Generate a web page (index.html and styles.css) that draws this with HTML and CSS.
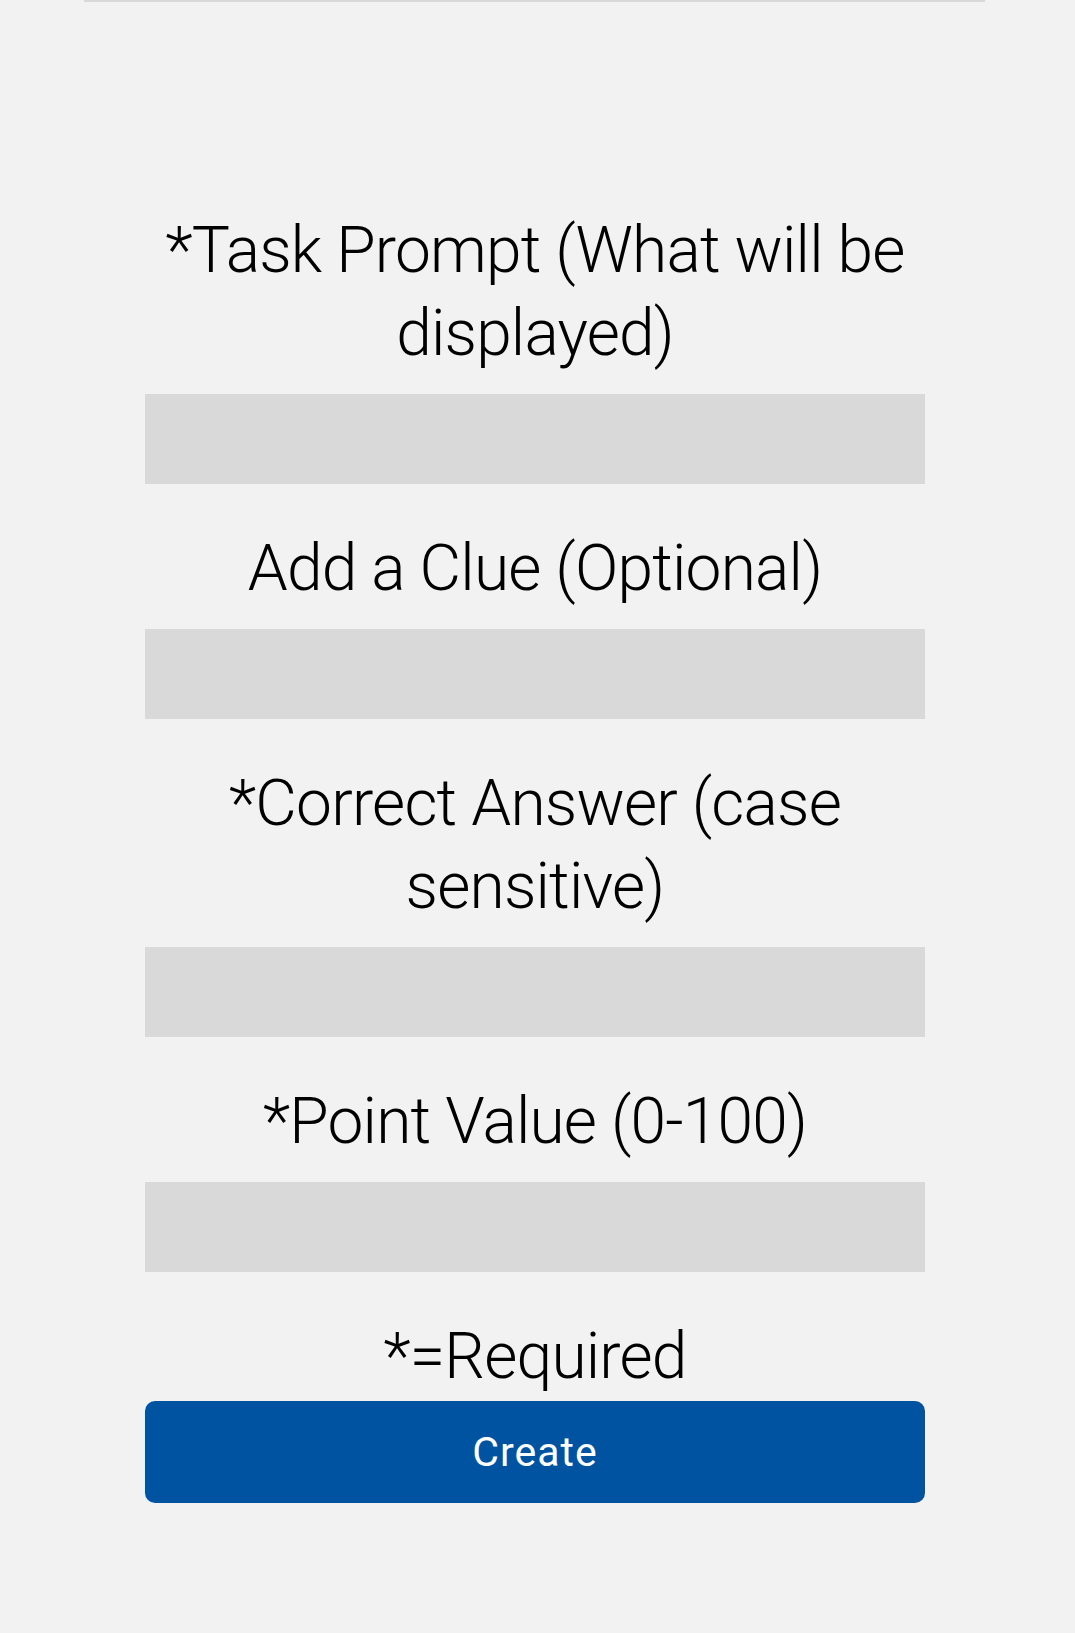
FILE: index.html
```html
<!DOCTYPE html>
<html lang="en">
<head>
<meta charset="utf-8">
<title>Create Task</title>
<link rel="stylesheet" href="styles.css">
</head>
<body>
<div class="page">
  <form class="task-form">
    <label class="field-label" for="prompt">*Task Prompt (What will be displayed)</label>
    <input class="field-input" id="prompt" type="text">
    <label class="field-label" for="clue">Add a Clue (Optional)</label>
    <input class="field-input" id="clue" type="text">
    <label class="field-label" for="answer">*Correct Answer (case sensitive)</label>
    <input class="field-input" id="answer" type="text">
    <label class="field-label" for="points">*Point Value (0-100)</label>
    <input class="field-input" id="points" type="text">
    <p class="required-note">*=Required</p>
    <button class="create-btn" type="button">Create</button>
  </form>
</div>
</body>
</html>
```

FILE: styles.css
```css
html, body {
  margin: 0;
  padding: 0;
  background: #f2f2f2;
}

body {
  font-family: Roboto, "Noto Sans", sans-serif;
  font-weight: 300;
  color: #000;
}

.page {
  width: 901px;
  margin-left: 84px;
  border-top: 2px solid #d9d9d9;
  min-height: 1631px;
  box-sizing: border-box;
  padding-top: 207px;
}

.task-form {
  width: 780px;
  margin-left: 61px;
  display: flex;
  flex-direction: column;
  align-items: stretch;
}

.field-label,
.required-note {
  display: block;
  text-align: center;
  font-size: 64px;
  line-height: 83px;
  letter-spacing: -0.8px;
  padding: 0;
}

.field-label {
  margin: 0 0 19px;
}

.required-note {
  margin: 0;
}

.field-input {
  display: block;
  height: 90px;
  margin: 0 0 43px;
  border: none;
  background: #d9d9d9;
  padding: 0 12px;
  font: inherit;
  font-size: 40px;
  box-sizing: border-box;
}

.create-btn {
  display: block;
  margin-top: 3px;
  height: 102px;
  border: none;
  border-radius: 10px;
  background: #0053a1;
  color: #fff;
  font-family: inherit;
  font-weight: 400;
  font-size: 41px;
  letter-spacing: 1px;
  padding: 0;
  cursor: pointer;
}
```
